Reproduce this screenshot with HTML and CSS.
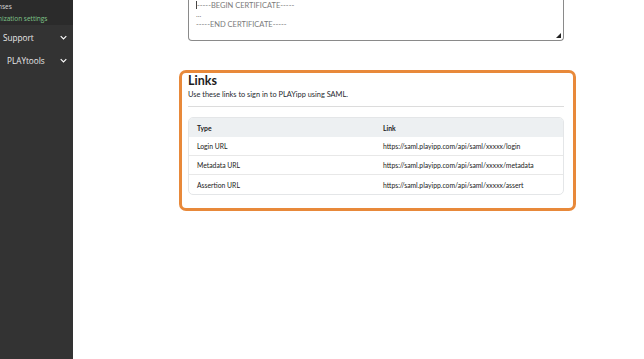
FILE: index.html
```html
<!DOCTYPE html>
<html>
<head>
<meta charset="utf-8">
<link rel="stylesheet" href="styles.css">
</head>
<body>
<aside class="sidebar">
  <div class="sub">
    <div class="sub-item">nses</div>
    <div class="sub-item active">nization settings</div>
  </div>
  <div class="nav-item nav-support"><span>Support</span><svg class="chev" viewBox="0 0 10 6"><path d="M1 1l4 4 4-4" fill="none" stroke="#fff" stroke-width="1.6"/></svg></div>
  <div class="nav-item nav-tools"><span>PLAYtools</span><svg class="chev" viewBox="0 0 10 6"><path d="M1 1l4 4 4-4" fill="none" stroke="#fff" stroke-width="1.6"/></svg></div>
</aside>
<main class="main">
  <div class="cert">
    <div class="cert-line first"><span class="caret"></span>-----BEGIN CERTIFICATE-----</div>
    <div class="cert-line">...</div>
    <div class="cert-line">-----END CERTIFICATE-----</div>
    <svg class="grip" viewBox="0 0 6 6"><path d="M6 0V6H0Z" fill="#222"/></svg>
  </div>
  <section class="links">
    <h2 class="links-title">Links</h2>
    <p class="links-sub">Use these links to sign in to PLAYipp using SAML.</p>
    <div class="table">
      <div class="row head"><div class="c1">Type</div><div class="c2">Link</div></div>
      <div class="row"><div class="c1">Login URL</div><div class="c2">https://saml.playipp.com/api/saml/xxxxx/login</div></div>
      <div class="row"><div class="c1">Metadata URL</div><div class="c2">https://saml.playipp.com/api/saml/xxxxx/metadata</div></div>
      <div class="row last"><div class="c1">Assertion URL</div><div class="c2">https://saml.playipp.com/api/saml/xxxxx/assert</div></div>
    </div>
  </section>
</main>
</body>
</html>
```
FILE: styles.css
```css
html, body { margin: 0; padding: 0; }
body {
  display: flex;
  width: 644px;
  height: 359px;
  overflow: hidden;
  background: #fff;
  font-family: "Lato", "Noto Sans", sans-serif;
}
.sidebar {
  width: 73px;
  flex: none;
  background: #333333;
  color: #e8e8e8;
  font-family: "Open Sans", "Noto Sans", sans-serif;
}
.sub {
  background: #2b2b2b;
  height: 25px;
  font-size: 6.5px;
  padding-top: 1px;
  box-sizing: border-box;
}
.sub-item { height: 12px; line-height: 12px; margin-left: -2px; color: #d8d8d8; }
.sub-item.active { color: #7fc48a; }
.nav-item {
  display: flex;
  align-items: center;
  justify-content: space-between;
  font-size: 8.2px;
  height: 23px;
  padding-right: 6px;
}
.nav-support { padding-left: 3px; margin-top: 1px; }
.nav-tools { padding-left: 7px; }
.chev { width: 7px; height: 5px; }
.main {
  flex: 1;
  padding-left: 115px;
}
.cert {
  position: relative;
  width: 376px;
  height: 41px;
  box-sizing: border-box;
  border: 1px solid #8a8a8a;
  border-top: none;
  border-radius: 0 0 4px 4px;
  padding: 0 7px 11px;
  font-size: 7.5px;
  color: #7a7a7a;
  display: flex;
  flex-direction: column;
  justify-content: flex-end;
}
.cert-line { height: 9.5px; line-height: 9.5px; white-space: nowrap; }
.caret { display: inline-block; width: 1px; height: 8px; background: #444; vertical-align: -1px; }
.grip { position: absolute; right: 2px; bottom: 2px; width: 5px; height: 5px; }
.links {
  margin: 29px 0 0 -9px;
  width: 397px;
  box-sizing: border-box;
  border: 3px solid #e8893a;
  border-radius: 7px;
  padding: 0 9px 13px 6px;
}
.links-title {
  margin: 0;
  font-size: 12.5px;
  font-weight: 700;
  color: #1d1d1d;
  line-height: 15px;
}
.links-sub {
  margin: 2px 0 0;
  font-size: 7.4px;
  color: #1f2a30;
  line-height: 10px;
  padding-bottom: 6px;
  border-bottom: 1px solid #dcdcdc;
}
.table {
  margin-top: 10px;
  border: 1px solid #e4e6e8;
  border-radius: 5px;
  overflow: hidden;
  font-size: 6.8px;
  color: #222;
}
.row {
  display: flex;
  height: 19px;
  align-items: center;
  border-bottom: 1px solid #e8e8e8;
  box-sizing: border-box;
}
.row.last { border-bottom: none; }
.row.head { background: #edf0f2; font-weight: 700; border-bottom: none; }
.c1 { width: 194px; padding-left: 8px; box-sizing: border-box; }
.c2 { flex: 1; }
```
